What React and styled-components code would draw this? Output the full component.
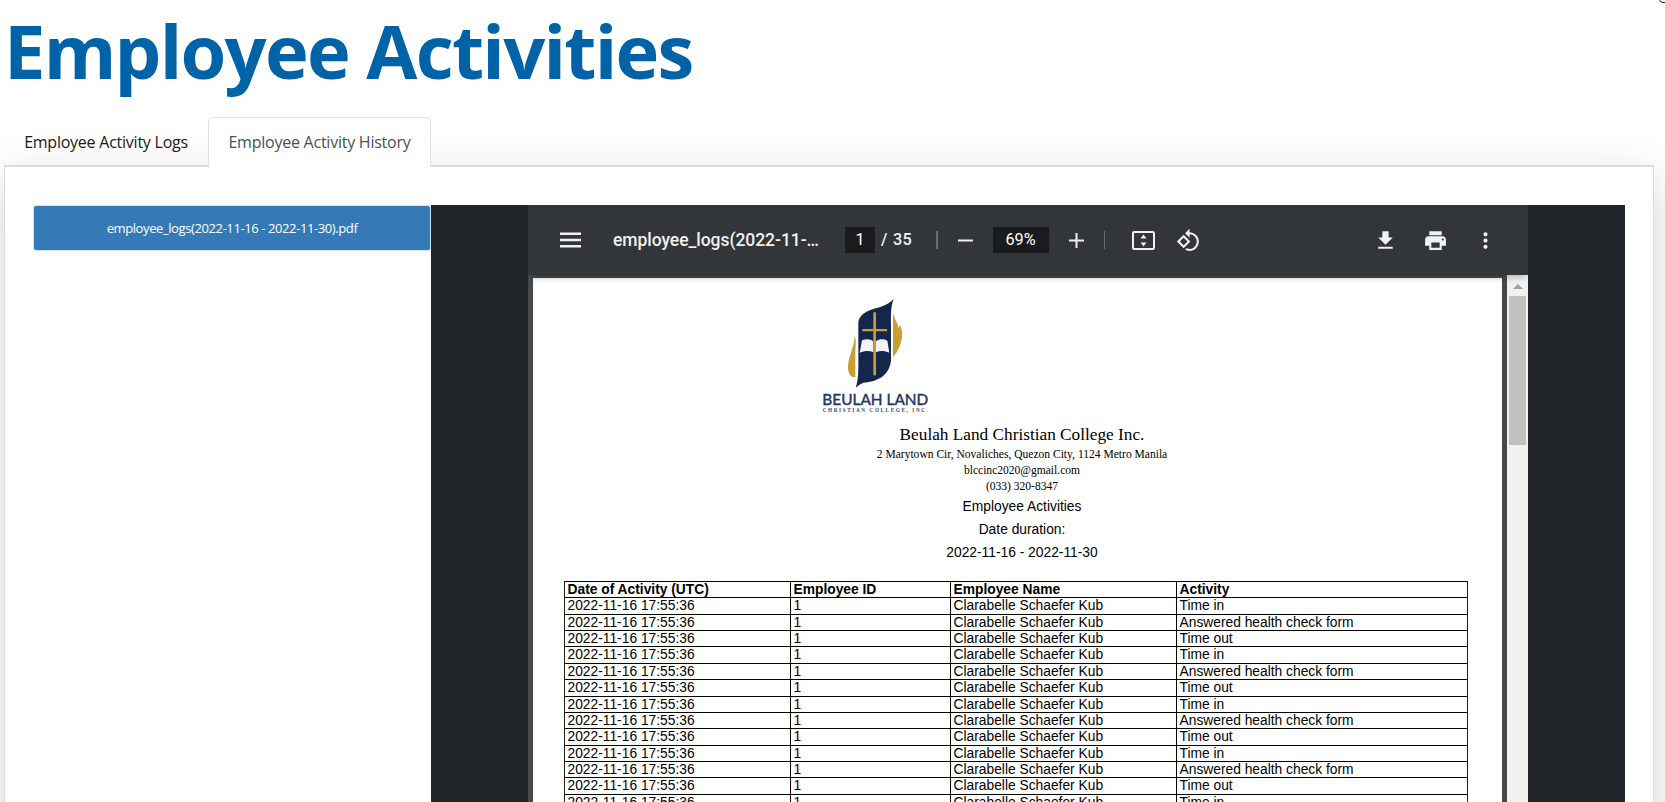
import React from "react";
import styled, { createGlobalStyle } from "styled-components";
import { MdRotate90DegreesCcw, MdPrint, MdMoreVert } from "react-icons/md";

const Global = createGlobalStyle`
  *, *::before, *::after { box-sizing: border-box; }
  html, body { margin: 0; height: 100%; overflow: hidden; background: #fff; }
  body { font-family: "Open Sans", "Noto Sans", sans-serif; color: #212529; }
`;

const Screen = styled.div`
  position: relative;
  width: 1665px;
  height: 802px;
  overflow: hidden;
  display: flex;
  flex-direction: column;
  padding-left: 4px;
`;

const CornerControl = styled.div`
  position: absolute;
  top: -17px;
  left: 1659px;
  width: 20px;
  height: 20px;
  border: 1px solid #222;
  border-radius: 4px;
`;

const Title = styled.h1`
  flex: none;
  margin: 0;
  height: 117px;
  font-size: 74px;
  line-height: 101px;
  font-weight: 700;
  letter-spacing: -1.75px;
  color: #0063a8;
  white-space: nowrap;
`;

const Tabs = styled.nav`
  position: relative;
  z-index: 1;
  flex: none;
  display: flex;
  height: 49px;
`;

const Tab = styled.button`
  width: ${(p) => p.$width}px;
  height: ${(p) => (p.$active ? 50 : 49)}px;
  padding: 0 0 ${(p) => (p.$active ? 2 : 1)}px;
  border: 1px solid ${(p) => (p.$active ? "#dee2e6" : "transparent")};
  border-bottom: 0;
  border-radius: 5px 5px 0 0;
  background: ${(p) => (p.$active ? "#fff" : "transparent")};
  color: ${(p) => (p.$active ? "#495057" : "#16191c")};
  font: 500 16px/46px "Open Sans", sans-serif;
  letter-spacing: -0.24px;
  white-space: nowrap;
`;

const Card = styled.section`
  flex: none;
  width: 1650px;
  height: 1200px;
  margin-top: -1px;
  padding: 38px 28px 0 28px;
  display: flex;
  align-items: flex-start;
  border: 1px solid #dcdcdc;
  border-top: 2px solid #dadbdc;
  background: #fff;
  box-shadow: 0 16px 48px rgba(0, 0, 0, 0.175);
`;

const FileButton = styled.button`
  width: 398px;
  height: 46px;
  padding: 0;
  border: 1px solid #d3e4f3;
  border-radius: 3px;
  background: #337ab7;
  color: #fff;
  font: 400 13px/44px "Open Sans", sans-serif;
  letter-spacing: -0.4px;
`;

const Stage = styled.div`
  width: 1194px;
  height: 1100px;
  background: #212529;
  display: flex;
  justify-content: center;
`;

const Viewer = styled.div`
  width: 1000px;
  display: flex;
  flex-direction: column;
`;

const Toolbar = styled.header`
  position: relative;
  z-index: 1;
  flex: none;
  display: flex;
  align-items: center;
  height: 70px;
  padding-left: 32px;
  background: #323639;
  color: #f1f1f1;
  font: 500 16.25px/26px Roboto, sans-serif;
  box-shadow: 0 5px 6px -2px rgba(0, 0, 0, 0.22);
`;

const FileName = styled.span`
  flex: none;
  width: 232px;
  margin-left: 32px;
  font-size: 17.5px;
  letter-spacing: -0.05px;
  white-space: nowrap;
`;

const Field = styled.span`
  flex: none;
  width: ${(p) => p.$width}px;
  height: 26px;
  background: #191b1c;
  color: #fff;
  text-align: center;
  font-weight: 400;
`;

const PageCount = styled.span`
  flex: none;
  width: 61px;
  padding-left: 6px;
  letter-spacing: 0.3px;
  word-spacing: 1px;
  white-space: nowrap;
`;

const Divider = styled.i`
  flex: none;
  width: 1.5px;
  height: 18px;
  background: #6b6e70;
`;

const ToolIcon = styled.span`
  flex: none;
  display: flex;
  justify-content: center;
  width: ${(p) => p.$width}px;
  svg { flex: none; display: block; }
`;

const Actions = styled.div`
  display: flex;
  margin: 0 18px 0 auto;
`;

const Scroller = styled.div`
  flex: 1;
  display: flex;
  padding-left: 5px;
  background: #45494c;
`;

const Page = styled.article`
  width: 969px;
  margin: 3px 5px 0 0;
  padding: 10px 35px 0 31px;
  background: #fff;
  color: #000;
  font-family: "Liberation Sans", Arial, sans-serif;
  font-size: 13.8px;
`;

const LogoBox = styled.div`
  width: 130px;
  height: 135px;
  margin: -3px 0 0 246px;
`;

const Letterhead = styled.div`
  display: flex;
  flex-direction: column;
  align-items: center;
  width: 300px;
  height: 161px;
  margin-left: 308px;
  white-space: nowrap;
`;

const School = styled.div`
  margin: 5px 0 1px;
  font: 17.25px/20px "Liberation Serif", serif;
`;

const Contact = styled.div`
  font: 11.55px/16px "Liberation Serif", serif;
`;

const Heading = styled.div`
  position: relative;
  top: 1px;
  font-size: 13.8px;
  line-height: 23px;
`;

const Table = styled.div`
  width: 904px;
  border: solid #222;
  border-width: 0 1px;
`;

const Row = styled.div`
  display: grid;
  grid-template-columns: 225px 160px 226px 1fr;
  height: 16.36px;
  border-top: 1px solid #000;
  line-height: 15.4px;
  font-weight: ${(p) => (p.$head ? 700 : 400)};
`;

const Cell = styled.span`
  padding-left: 2.5px;
  white-space: nowrap;
  & + & { border-left: 1px solid #000; }
`;

const Scrollbar = styled.div`
  display: flex;
  flex-direction: column;
  align-items: center;
  width: 21px;
  background: #f1f1f1;
`;

const ArrowUp = styled.i`
  margin: 9px 0 7px;
  border: solid transparent;
  border-width: 0 5px 5px;
  border-bottom-color: #a0a0a0;
`;

const Thumb = styled.div`
  width: 17px;
  height: 149px;
  background: #c1c1c1;
`;

const Logo = () => (
  <svg width="130" height="135" viewBox="0 0 390 405">
    <path fill="#c99f33" d="M134 151C139 166 137 180 136 200L136 276C124 279 113 265 114 245C115 219 124 203 128 186C132 172 134 163 134 151Z" />
    <path fill="#c99f33" d="M251 84C252 95 255 104 260 111C263 117 264 123 264 129C267 126 269 124 270 120C277 134 278 151 274 167C269 189 258 207 249 216V106C249 98 249 91 251 84Z" />
    <path fill="#14264c" d="M251 42C241 68 243 95 243 128V224C240 270 203 290 161 293C151 296 143 302 137 309C146 282 145 257 145 229V112C150 80 187 73 211 66C228 61 239 54 251 42Z" />
    <path fill="#f3f3f6" d="M156 166C170 161 181 162 190 169V202C177 196 164 198 149 203ZM198 169C209 161 221 162 232 167L238 203C224 198 212 196 198 202Z" />
    <path fill="#c99f33" d="M190 82H198V132H231V139H198V271H190V139H157V132H190Z" />
    <text x="37" y="360" fill="#1c3560" stroke="#1c3560" strokeWidth="1.2" fontFamily="Lato, sans-serif" fontWeight="400" fontSize="45" textLength="318" lengthAdjust="spacingAndGlyphs">BEULAH LAND</text>
    <text x="38" y="382" fill="#3b4866" fontFamily="Liberation Serif, serif" fontWeight="700" fontSize="15.5" textLength="316">CHRISTIAN COLLEGE, INC.</text>
  </svg>
);

const MenuIcon = () => (
  <svg width="21" height="16" viewBox="0 0 21 16" fill="#f1f1f1">
    <path d="M0 0.5h21v2.5H0zM0 6.7h21v2.5H0zM0 13h21v2.5H0z" />
  </svg>
);

const MinusIcon = () => (
  <svg width="15" height="15" viewBox="0 0 15 15"><path fill="#f1f1f1" d="M0 6.5h15v2H0z" /></svg>
);

const PlusIcon = () => (
  <svg width="15" height="15" viewBox="0 0 15 15"><path fill="#f1f1f1" d="M0 6.5h6.5V0h2v6.5H15v2H8.5V15h-2V8.5H0z" /></svg>
);

const FitIcon = () => (
  <svg width="23" height="19" viewBox="0 0 23 19">
    <rect x="1" y="1" width="21" height="17" rx="1.3" fill="none" stroke="#f1f1f1" strokeWidth="2" />
    <path fill="#f1f1f1" d="M11.5 3.5l3 4h-6zM11.5 15.5l3-4h-6z" />
  </svg>
);

const DownloadIcon = () => (
  <svg width="25" height="25" viewBox="0 0 24 24" fill="#f1f1f1">
    <path d="M19 9h-4V3H9v6H5l7 7 7-7zM5 18v2h14v-2H5z" />
  </svg>
);

const activities = ["Time in", "Answered health check form", "Time out"];
const rows = Array.from({ length: 13 }, (_, i) => ({
  date: "2022-11-16 17:55:36",
  id: "1",
  name: "Clarabelle Schaefer Kub",
  activity: activities[i % 3],
}));

export default function App() {
  return (
    <Screen>
      <Global />
      <CornerControl />
      <Title>Employee Activities</Title>
      <Tabs>
        <Tab $width={204}>Employee Activity Logs</Tab>
        <Tab $width={223} $active>Employee Activity History</Tab>
      </Tabs>
      <Card>
        <FileButton>employee_logs(2022-11-16 - 2022-11-30).pdf</FileButton>
        <Stage>
          <Viewer>
            <Toolbar>
              <ToolIcon $width={21}><MenuIcon /></ToolIcon>
              <FileName>employee_logs(2022-11-…</FileName>
              <Field $width={30}>1</Field>
              <PageCount>/ 35</PageCount>
              <Divider />
              <ToolIcon $width={55}><MinusIcon /></ToolIcon>
              <Field $width={56}>69%</Field>
              <ToolIcon $width={55}><PlusIcon /></ToolIcon>
              <Divider />
              <ToolIcon $width={76}><FitIcon /></ToolIcon>
              <ToolIcon $width={14}><MdRotate90DegreesCcw size={25} /></ToolIcon>
              <Actions>
                <ToolIcon $width={50}><DownloadIcon /></ToolIcon>
                <ToolIcon $width={50}><MdPrint size={25} /></ToolIcon>
                <ToolIcon $width={50}><MdMoreVert size={25} /></ToolIcon>
              </Actions>
            </Toolbar>
            <Scroller>
              <Page>
                <LogoBox><Logo /></LogoBox>
                <Letterhead>
                  <School>Beulah Land Christian College Inc.</School>
                  <Contact>2 Marytown Cir, Novaliches, Quezon City, 1124 Metro Manila</Contact>
                  <Contact>blccinc2020@gmail.com</Contact>
                  <Contact>(033) 320-8347</Contact>
                  <Heading>Employee Activities</Heading>
                  <Heading>Date duration:</Heading>
                  <Heading>2022-11-16 - 2022-11-30</Heading>
                </Letterhead>
                <Table>
                  <Row $head>
                    <Cell>Date of Activity (UTC)</Cell>
                    <Cell>Employee ID</Cell>
                    <Cell>Employee Name</Cell>
                    <Cell>Activity</Cell>
                  </Row>
                  {rows.map((r, i) => (
                    <Row key={i}>
                      <Cell>{r.date}</Cell>
                      <Cell>{r.id}</Cell>
                      <Cell>{r.name}</Cell>
                      <Cell>{r.activity}</Cell>
                    </Row>
                  ))}
                </Table>
              </Page>
              <Scrollbar>
                <ArrowUp />
                <Thumb />
              </Scrollbar>
            </Scroller>
          </Viewer>
        </Stage>
      </Card>
    </Screen>
  );
}
